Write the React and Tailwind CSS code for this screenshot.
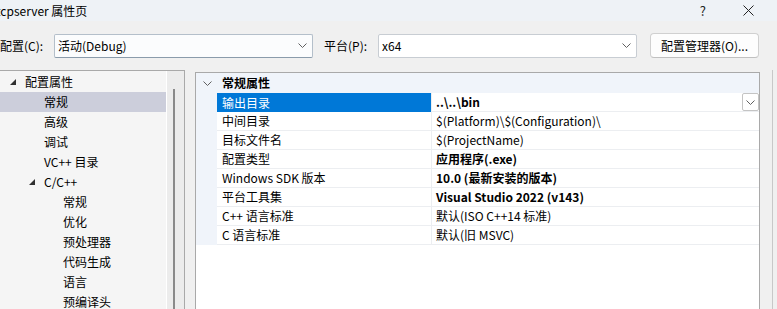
import React from "react";

const Chevron = ({ className = "" }) => (
  <svg width="9" height="5" viewBox="0 0 9 5" className={className}>
    <path d="M0.5 0.5 L4.5 4.5 L8.5 0.5" fill="none" stroke="#606060" strokeWidth="1" />
  </svg>
);

const Tri = () => (
  <svg width="6" height="6" viewBox="0 0 6 6">
    <polygon points="6,0 6,6 0,6" fill="#303030" />
  </svg>
);

const tree = [
  { t: "配置属性", pad: "pl-[10px]", tri: true },
  { t: "常规", pad: "pl-[44px]", sel: true },
  { t: "高级", pad: "pl-[44px]" },
  { t: "调试", pad: "pl-[44px]" },
  { t: "VC++ 目录", pad: "pl-[44px]" },
  { t: "C/C++", pad: "pl-[29px]", tri: true },
  { t: "常规", pad: "pl-[63px]" },
  { t: "优化", pad: "pl-[63px]" },
  { t: "预处理器", pad: "pl-[63px]" },
  { t: "代码生成", pad: "pl-[63px]" },
  { t: "语言", pad: "pl-[63px]" },
  { t: "预编译头", pad: "pl-[63px]" },
];

const rows = [
  { n: "输出目录", v: "..\\..\\bin", b: true, sel: true },
  { n: "中间目录", v: "$(Platform)\\$(Configuration)\\" },
  { n: "目标文件名", v: "$(ProjectName)" },
  { n: "配置类型", v: "应用程序(.exe)", b: true },
  { n: "Windows SDK 版本", v: "10.0 (最新安装的版本)", b: true },
  { n: "平台工具集", v: "Visual Studio 2022 (v143)", b: true },
  { n: "C++ 语言标准", v: "默认(ISO C++14 标准)" },
  { n: "C 语言标准", v: "默认(旧 MSVC)" },
];

export default function App() {
  return (
    <div className="w-[777px] h-[309px] overflow-hidden bg-[#f0f0f0] text-[12px] leading-none text-black font-['Segoe_UI','Noto_Sans_CJK_SC',sans-serif] flex flex-col">
      {/* Title bar */}
      <div className="h-[21px] shrink-0 bg-[#eef2f6] flex items-center">
        <span className="ml-[-4px] whitespace-nowrap">tcpserver 属性页</span>
        <div className="flex-1" />
        <span className="text-[13px] text-[#222]">?</span>
        <svg width="11" height="11" viewBox="0 0 11 11" className="ml-[37px] mr-[23px]">
          <path d="M0.5 0.5 L10.5 10.5 M10.5 0.5 L0.5 10.5" stroke="#222" strokeWidth="1" />
        </svg>
      </div>

      {/* Config row */}
      <div className="mt-[12px] h-[25px] shrink-0 flex items-center">
        <span className="w-[54px] whitespace-nowrap">配置(C):</span>
        <div className="w-[259px] h-[24px] border border-[#b4bfca] border-b-[#8a9bab] rounded-[2px] bg-[#fbfcfd] flex items-center pl-[3px] pr-[5px]">
          <span className="flex-1">活动(Debug)</span>
          <Chevron />
        </div>
        <span className="ml-[11px] w-[54px] whitespace-nowrap">平台(P):</span>
        <div className="w-[259px] h-[24px] border border-[#c8cdd3] rounded-[2px] bg-white flex items-center pl-[3px] pr-[5px]">
          <span className="flex-1">x64</span>
          <Chevron />
        </div>
        <div className="ml-[13px] w-[109px] h-[25px] border border-[#d0d0d0] border-b-[#c0c0c0] rounded-[4px] bg-[#fdfdfd] flex items-center justify-center">
          配置管理器(O)...
        </div>
      </div>

      {/* Panels */}
      <div className="mt-[12px] flex-1 flex min-h-0">
        {/* Tree */}
        <div className="w-[185px] border-t border-r border-[#a9a9a9] flex">
          <div className="w-[166px] bg-[#f5f5f5] pt-[1px] flex flex-col">
            {tree.map((r, i) => (
              <div
                key={i}
                className={`h-[20px] shrink-0 flex items-center whitespace-nowrap ${r.pad} ${r.sel ? "bg-[#cccedb]" : ""}`}
              >
                {r.tri && (
                  <span className="mr-[9px] flex items-center">
                    <Tri />
                  </span>
                )}
                <span>{r.t}</span>
              </div>
            ))}
          </div>
          <div className="w-[1px] bg-white" />
          <div className="flex-1 bg-[#ececec] pl-[6px] pt-[18px]">
            <div className="w-[2px] h-full bg-[#8a8a8a]" />
          </div>
        </div>

        {/* Property grid */}
        <div className="ml-[10px] mt-[2px] w-[565px] border-t border-l border-r border-[#a9a9a9] bg-white flex flex-col">
          <div className="h-[20px] shrink-0 bg-[#f0f4fa] flex items-center">
            <Chevron className="ml-[7px]" />
            <span className="ml-[10px] font-bold">常规属性</span>
          </div>
          {rows.map((r, i) => (
            <div key={i} className="h-[19px] shrink-0 flex">
              <div className="w-[21px] bg-[#f0f4fa]" />
              <div
                className={`w-[215px] pl-[5px] flex items-center border-r border-[#eceef1] whitespace-nowrap ${r.sel ? "bg-[#0078d7] text-white" : "border-b"}`}
              >
                {r.n}
              </div>
              <div className="flex-1 pl-[4px] flex items-center border-b border-[#eceef1] whitespace-nowrap">
                <span className={`flex-1 ${r.b ? "font-bold" : ""}`}>{r.v}</span>
                {r.sel && (
                  <div className="w-[17px] h-[18px] border border-[#c4c4c4] rounded-[2px] bg-white flex items-center justify-center">
                    <Chevron />
                  </div>
                )}
              </div>
            </div>
          ))}
          <div className="flex-1 bg-white" />
        </div>

        <div className="ml-[12px] w-[1px] bg-[#c8c8c8]" />
      </div>
    </div>
  );
}
